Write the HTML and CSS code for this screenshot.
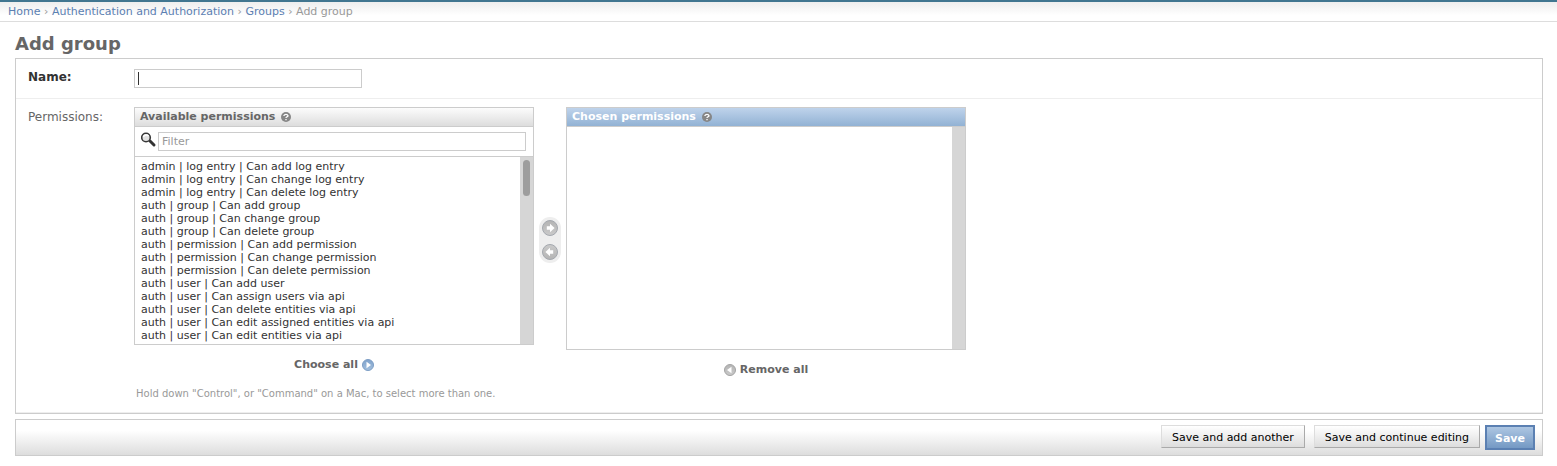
FILE: index.html
```
<!DOCTYPE html>
<html lang="en">
<head>
<meta charset="utf-8">
<title>Add group</title>
<link rel="stylesheet" href="styles.css">
</head>
<body>
<svg class="defs" width="0" height="0" aria-hidden="true">
  <defs>
    <linearGradient id="grey" x1="0" y1="0" x2="0" y2="1"><stop offset="0" stop-color="#b4b4b4"/><stop offset="1" stop-color="#cacaca"/></linearGradient>
    <linearGradient id="blue" x1="0" y1="0" x2="0" y2="1"><stop offset="0" stop-color="#7fa2cb"/><stop offset="1" stop-color="#a3c0de"/></linearGradient>
    <symbol id="help" viewBox="0 0 10 10"><circle cx="5" cy="5" r="5" fill="#868686"/><path d="M3 4V3.4Q3.4 2.3 5 2.3T7 3.7Q7 4.6 5.6 5Q5 5.3 5 6.1M5 7.1V8.3" fill="none" stroke="#fff" stroke-width="1.3"/></symbol>
    <symbol id="arrow" viewBox="0 0 16 16"><circle cx="8" cy="8" r="7.5" fill="url(#grey)" stroke="#a4a8ae"/><path d="M4.8 6.2H8V3.8L12.6 8L8 12.2V9.8H4.8Z" fill="#fff"/></symbol>
  </defs>
</svg>
<nav class="breadcrumbs" aria-label="Breadcrumbs">
  <a href="#">Home</a> › <a href="#">Authentication and Authorization</a> › <a href="#">Groups</a> › Add group
</nav>
<main class="content">
  <h1>Add group</h1>
  <form>
    <fieldset class="module">
      <div class="form-row name-row">
        <label class="required" for="name">Name:</label>
        <input class="text-field name-field" id="name" type="text">
      </div>
      <div class="form-row permissions-row">
        <label for="available">Permissions:</label>
        <div class="permissions">
          <div class="selector">
            <div class="column">
              <section class="panel">
                <h2>Available permissions <svg class="help-icon"><use href="#help"/></svg></h2>
                <div class="filter">
                  <label for="filter" aria-label="Filter"><svg class="search-icon" viewBox="0 0 16 16"><path d="M9 9L13 13" stroke="#333" stroke-width="3" stroke-linecap="round"/><circle cx="5" cy="5.5" r="4.3" fill="#e2e2e2" stroke="#383838" stroke-width="1.6"/><path d="M2.4 5A3 3 0 0 1 7.5 4" fill="none" stroke="#fff" stroke-width="1.4"/></svg></label>
                  <input class="text-field filter-field" id="filter" type="text" placeholder="Filter">
                </div>
                <div class="list">
                  <select id="available" multiple size="14">
                    <option>admin | log entry | Can add log entry</option>
                    <option>admin | log entry | Can change log entry</option>
                    <option>admin | log entry | Can delete log entry</option>
                    <option>auth | group | Can add group</option>
                    <option>auth | group | Can change group</option>
                    <option>auth | group | Can delete group</option>
                    <option>auth | permission | Can add permission</option>
                    <option>auth | permission | Can change permission</option>
                    <option>auth | permission | Can delete permission</option>
                    <option>auth | user | Can add user</option>
                    <option>auth | user | Can assign users via api</option>
                    <option>auth | user | Can delete entities via api</option>
                    <option>auth | user | Can edit assigned entities via api</option>
                    <option>auth | user | Can edit entities via api</option>
                  </select>
                  <div class="track"><div class="thumb"></div></div>
                </div>
              </section>
              <a class="bulk" href="#">Choose all <svg class="bulk-icon" viewBox="0 0 12 12"><circle cx="6" cy="6" r="5.5" fill="url(#blue)" stroke="#7c9dc4"/><path d="M4.5 2.8L9 6L4.5 9.2Z" fill="#fff"/></svg></a>
            </div>
            <div class="chooser">
              <button type="button" aria-label="Choose"><svg class="arrow-icon"><use href="#arrow"/></svg></button>
              <button type="button" aria-label="Remove"><svg class="arrow-icon back"><use href="#arrow"/></svg></button>
            </div>
            <div class="column">
              <section class="panel chosen">
                <h2>Chosen permissions <svg class="help-icon"><use href="#help"/></svg></h2>
                <div class="list">
                  <select id="chosen" multiple size="17" aria-label="Chosen permissions"></select>
                  <div class="track"></div>
                </div>
              </section>
              <a class="bulk" href="#"><svg class="bulk-icon" viewBox="0 0 12 12"><circle cx="6" cy="6" r="5.5" fill="url(#grey)" stroke="#a3a3a3"/><path d="M7.5 2.8L3 6L7.5 9.2Z" fill="#fff"/></svg> Remove all</a>
            </div>
          </div>
          <p class="help-text">Hold down "Control", or "Command" on a Mac, to select more than one.</p>
        </div>
      </div>
    </fieldset>
    <div class="submit-row">
      <button class="button" type="submit">Save and add another</button>
      <button class="button" type="submit">Save and continue editing</button>
      <button class="button default" type="submit">Save</button>
    </div>
  </form>
</main>
</body>
</html>
```
FILE: styles.css
```
* { box-sizing: border-box; }

body {
  margin: 0;
  background: #fff;
  color: #333;
  font: 12px/16px "DejaVu Sans", Verdana, sans-serif;
}

button, input, select { font-family: inherit; }
.defs { position: absolute; }

.breadcrumbs {
  padding: 3px 8px 2px;
  border-top: 2px solid #417690;
  border-bottom: 1px solid #ddd;
  background: linear-gradient(#eee, #fff 70%);
  color: #999;
  font-size: 11px;
  line-height: 14px;
}

.breadcrumbs a { color: #5b80b2; text-decoration: none; }

.content { padding: 11px 14px 10px 15px; }

h1 {
  margin: 0 0 3px;
  color: #666;
  font-size: 18px;
  line-height: 22px;
}

.module {
  margin: 0 0 5px;
  padding: 0;
  border: 1px solid #ccc;
}

.form-row {
  display: flex;
  align-items: flex-start;
  border-bottom: 1px solid #eee;
}

.name-row { padding: 10px 12px; }
.permissions-row { padding: 8px 12px 11px; }

.form-row > label {
  flex: 0 0 106px;
  color: #666;
}

.permissions-row > label { padding-top: 2px; }
.form-row > .required { color: #333; font-weight: bold; }

.text-field {
  height: 19px;
  margin: 0;
  padding: 2px 3px;
  border: 1px solid #ccc;
  border-radius: 0;
  background: #fff;
  font-size: 11px;
}

.name-field {
  width: 228px;
  background: linear-gradient(#333, #333) 3px 2px / 1px 13px no-repeat;
  caret-color: transparent;
}

.permissions { flex: 1; min-width: 0; }

.selector {
  display: flex;
  align-items: flex-start;
  gap: 5px;
}

.column { flex: 0 1 400px; min-width: 0; }

.panel { border: 1px solid #ccc; }

.panel h2 {
  display: flex;
  align-items: center;
  gap: 6px;
  margin: 0;
  padding: 1px 5px 2px;
  border-bottom: 1px solid #ccc;
  background: linear-gradient(#fcfcfc, #ddd);
  color: #666;
  font-size: 11px;
  line-height: 15px;
}

.chosen h2 {
  background: linear-gradient(#bfd3eb, #92b2d4);
  color: #fff;
}

.help-icon { width: 10px; height: 10px; margin-top: 1px; }

.filter {
  display: flex;
  align-items: flex-start;
  gap: 1px;
  padding: 5px 7px 5px 6px;
  border-bottom: 1px solid #ccc;
}

.filter label { height: 16px; }
.search-icon { display: block; width: 16px; height: 16px; }
.filter-field { flex: 1; min-width: 0; }
.filter-field::placeholder { color: #999; }

.list { display: flex; height: 187px; }
.chosen .list { height: 222px; }

.list select {
  flex: 1;
  min-width: 0;
  margin: 0;
  padding: 3px 4px 2px;
  border: 0;
  border-radius: 0;
  outline: 0;
  background: #fff;
  color: #333;
  font-size: 11px;
  scrollbar-width: none;
}

.list option { min-height: 13px; padding: 0 2px; line-height: 13px; }

.track {
  flex: 0 0 13px;
  padding: 3px;
  background: #d6d6d6;
}

.thumb {
  height: 36px;
  border-radius: 4px;
  background: #9d9d9d;
}

.chooser {
  display: flex;
  flex-direction: column;
  gap: 8px;
  margin-top: 110px;
  padding: 3px;
  border-radius: 11px;
  background: #eee;
}

.chooser button {
  padding: 0;
  border: 0;
  background: none;
}

.arrow-icon { display: block; width: 16px; height: 16px; }
.back { transform: rotate(180deg); }

.bulk {
  display: flex;
  align-items: center;
  justify-content: center;
  gap: 4px;
  padding-top: 12px;
  color: #666;
  font-size: 11px;
  font-weight: bold;
  text-decoration: none;
}

.bulk-icon { width: 12px; height: 12px; }

.help-text {
  margin: 9px 0 0;
  padding-left: 2px;
  color: #999;
  font-size: 10px;
  line-height: 14px;
}

.submit-row {
  display: flex;
  align-items: flex-start;
  justify-content: flex-end;
  gap: 9px;
  padding: 5px 7px;
  border: 1px solid #ccc;
  background: linear-gradient(#fff 30%, #ddd);
}

.button {
  height: 23px;
  padding: 3px 10px 2px;
  border: 1px solid;
  border-color: #ddd #aaa #aaa #ddd;
  border-radius: 0;
  background: linear-gradient(#fff, #ddd);
  color: #000;
  font-size: 11px;
}

.default {
  height: 25px;
  margin-left: -4px;
  padding: 3px 8px 2px;
  border: 2px solid #5b80b2;
  background: linear-gradient(#adc6e2, #7499c4);
  color: #fff;
  font-weight: bold;
}
```
